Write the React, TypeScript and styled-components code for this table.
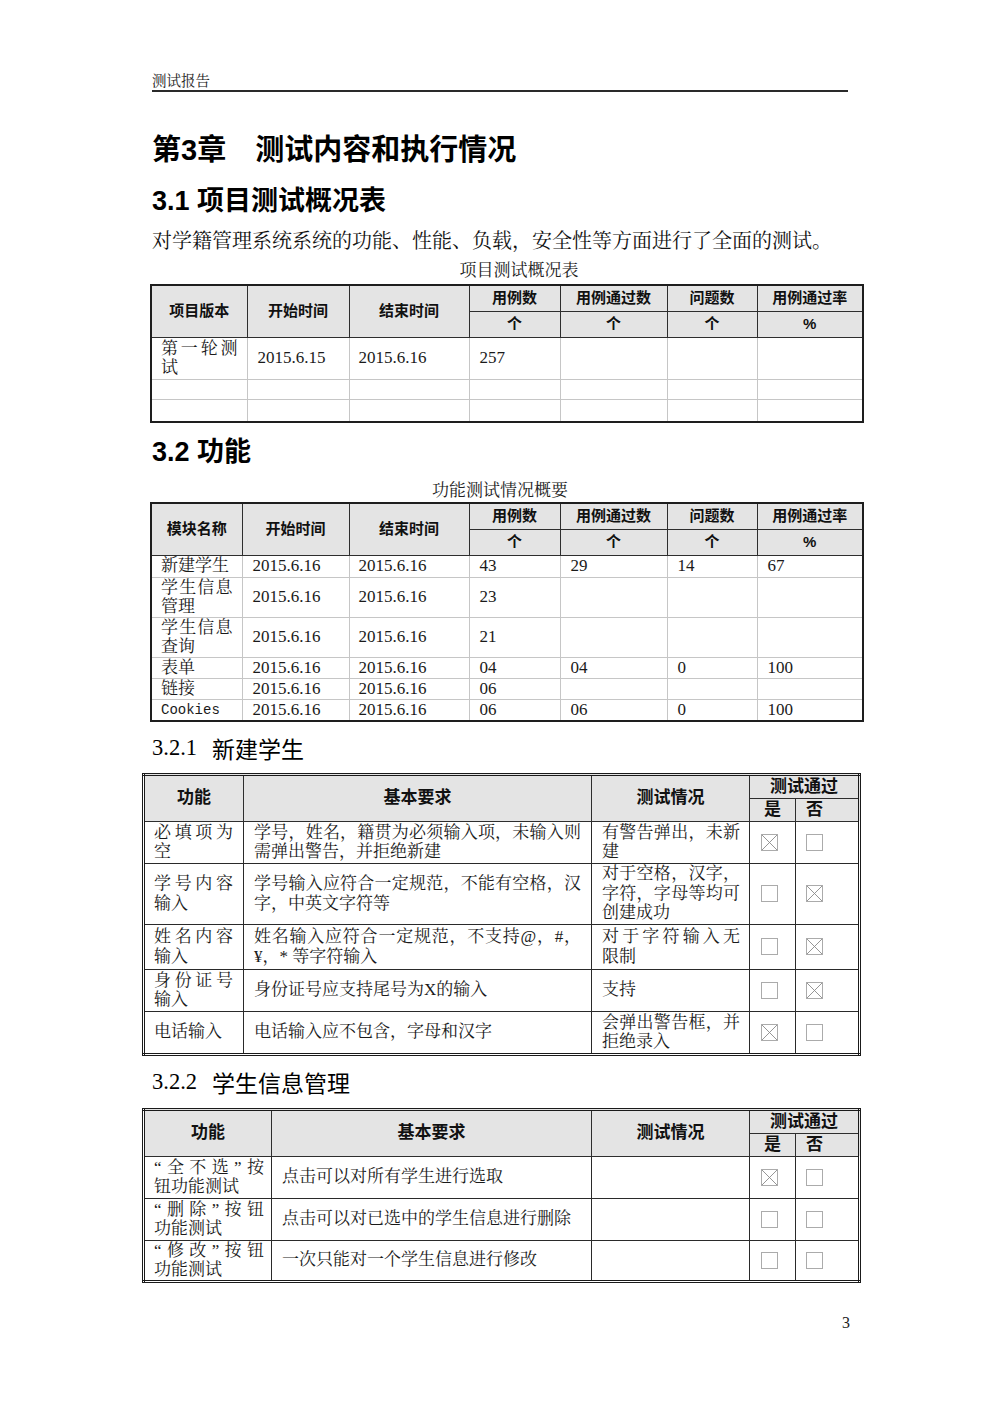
import React from 'react';
import styled, { createGlobalStyle } from 'styled-components';

const SERIF = `"Liberation Serif", "Noto Serif CJK SC", "Noto Sans CJK SC", serif`;
const SANS = `"Liberation Sans", "Noto Sans CJK SC", sans-serif`;
const MONO = `"Liberation Mono", "Noto Sans CJK SC", monospace`;

const GlobalStyle = createGlobalStyle`
  html, body { margin: 0; padding: 0; background: #fff; }
  body { color: #111; }
`;

const Page = styled.div`
  width: 1000px;
  height: 1415px;
  box-sizing: border-box;
  padding-left: 142px;
  display: flex;
  flex-direction: column;
  align-items: flex-start;
  background: #fff;
`;

const RunningHead = styled.div`
  margin-left: 10px;
  width: 696px;
  padding-top: 73px;
  height: 17px;
  font-family: ${SERIF};
  font-size: 14.5px;
  line-height: 17px;
  color: #222;
  border-bottom: 2px solid #2a2a2a;
`;

const ChapterTitle = styled.h1`
  margin: 38px 0 0 10px;
  height: 40px;
  font-family: ${SANS};
  font-weight: 700;
  font-size: 29px;
  line-height: 40px;
  color: #000;
  white-space: pre;
`;

const SectionTitle = styled.h2<{ $mt: number }>`
  margin: ${(p) => p.$mt}px 0 0 10px;
  height: 34px;
  font-family: ${SANS};
  font-weight: 700;
  font-size: 27px;
  line-height: 34px;
  color: #000;
`;

const SubTitle = styled.h3<{ $mt: number }>`
  margin: ${(p) => p.$mt}px 0 0 10px;
  height: 30px;
  display: flex;
  align-items: center;
  font-family: "Noto Sans CJK SC", sans-serif;
  font-weight: 400;
  font-size: 23px;
  line-height: 30px;
  color: #000;
`;

const SubNum = styled.span`
  font-family: "Liberation Serif", serif;
  font-size: 22.5px;
  margin-right: 15px;
`;

const Para = styled.p`
  margin: 9px 0 0 10px;
  height: 28px;
  font-family: ${SERIF};
  font-size: 20px;
  line-height: 28px;
  color: #111;
`;

const Caption = styled.div<{ $mt: number; $shift: number }>`
  margin: ${(p) => p.$mt}px 0 0 10px;
  width: 696px;
  height: 22px;
  box-sizing: border-box;
  padding-left: ${(p) => p.$shift}px;
  text-align: center;
  font-family: ${SERIF};
  font-size: 17px;
  line-height: 22px;
  color: #222;
`;

const SummaryTable = styled.table<{ $mt: number }>`
  margin: ${(p) => p.$mt}px 0 0 8px;
  width: 712px;
  table-layout: fixed;
  border-collapse: collapse;
  border: 2px solid #1e1e1e;
`;

const CheckTable = styled.table<{ $mt: number }>`
  margin: ${(p) => p.$mt}px 0 0 0;
  width: 716px;
  table-layout: fixed;
  border-collapse: collapse;
  border: 3px double #1a1a1a;
`;

const Tr = styled.tr<{ $h: number }>`
  height: ${(p) => p.$h}px;
`;

const HeadCell = styled.th<{ $size: number; $left?: boolean }>`
  background: #e4e4e4;
  border: 1px solid #2e2e2e;
  padding: 0 0 0 ${(p) => (p.$left ? 10 : 0)}px;
  text-align: ${(p) => (p.$left ? 'left' : 'center')};
  vertical-align: middle;
  font-family: ${SANS};
  font-weight: 700;
  font-size: ${(p) => p.$size}px;
  line-height: 20px;
  color: #111;
`;

const HeadText = styled.span`
  display: block;
  height: 20px;
`;

const Cell = styled.td<{ $light?: boolean; $pl?: number; $pr?: number; $font?: 'serif' | 'mono' }>`
  border: 1px solid ${(p) => (p.$light ? '#c6c6c6' : '#2a2a2a')};
  padding: 0 ${(p) => p.$pr ?? 9}px 0 ${(p) => p.$pl ?? 10}px;
  vertical-align: middle;
  text-align: left;
  font-family: ${(p) => (p.$font === 'mono' ? MONO : SERIF)};
  font-size: ${(p) => (p.$font === 'mono' ? 14 : 17)}px;
  line-height: 20px;
  color: #1a1a1a;
`;

const Line = styled.span<{ $fill: boolean }>`
  display: block;
  height: 19.5px;
  text-align: left;
  text-align-last: ${(p) => (p.$fill ? 'justify' : 'left')};
`;

const BoxSvg = styled.svg`
  display: block;
`;

const PageNumber = styled.div`
  margin-top: 30px;
  width: 708px;
  height: 20px;
  text-align: right;
  font-family: "Liberation Serif", serif;
  font-size: 16px;
  line-height: 20px;
  color: #222;
`;

const Lines: React.FC<{ lines: string[] }> = ({ lines }) => (
  <>
    {lines.map((l, i) => (
      <Line key={i} $fill={lines.length > 1 && i < lines.length - 1}>
        {l}
      </Line>
    ))}
  </>
);

const Box: React.FC<{ checked: boolean }> = ({ checked }) => (
  <BoxSvg width={17} height={17} viewBox="0 0 17 17">
    <rect x="0.5" y="0.5" width="16" height="16" fill="none" stroke="#ababab" strokeWidth="1" />
    {checked && <path d="M1 1 L16 16 M16 1 L1 16" stroke="#8a8a8a" strokeWidth="0.9" fill="none" />}
  </BoxSvg>
);

type SumRow = { h: number; name: string[]; mono?: boolean; s: string; e: string; v: string[] };

const sum1: SumRow[] = [
  { h: 42, name: ['第一轮测', '试'], s: '2015.6.15', e: '2015.6.16', v: ['257', '', '', ''] },
  { h: 20, name: [], s: '', e: '', v: ['', '', '', ''] },
  { h: 23, name: [], s: '', e: '', v: ['', '', '', ''] },
];

const sum2: SumRow[] = [
  { h: 22, name: ['新建学生'], s: '2015.6.16', e: '2015.6.16', v: ['43', '29', '14', '67'] },
  { h: 40, name: ['学生信息', '管理'], s: '2015.6.16', e: '2015.6.16', v: ['23', '', '', ''] },
  { h: 40, name: ['学生信息', '查询'], s: '2015.6.16', e: '2015.6.16', v: ['21', '', '', ''] },
  { h: 21, name: ['表单'], s: '2015.6.16', e: '2015.6.16', v: ['04', '04', '0', '100'] },
  { h: 21, name: ['链接'], s: '2015.6.16', e: '2015.6.16', v: ['06', '', '', ''] },
  { h: 21, name: ['Cookies'], mono: true, s: '2015.6.16', e: '2015.6.16', v: ['06', '06', '0', '100'] },
];

const Summary: React.FC<{ mt: number; first: string; firstW: number; rows: SumRow[] }> = ({ mt, first, firstW, rows }) => (
  <SummaryTable $mt={mt}>
    <colgroup>
      <col style={{ width: firstW }} />
      <col style={{ width: 198 - firstW }} />
      <col style={{ width: 120 }} />
      <col style={{ width: 91 }} />
      <col style={{ width: 107 }} />
      <col style={{ width: 90 }} />
      <col style={{ width: 106 }} />
    </colgroup>
    <thead>
      <Tr $h={26}>
        <HeadCell $size={15} rowSpan={2}><HeadText>{first}</HeadText></HeadCell>
        <HeadCell $size={15} rowSpan={2}><HeadText>开始时间</HeadText></HeadCell>
        <HeadCell $size={15} rowSpan={2}><HeadText>结束时间</HeadText></HeadCell>
        <HeadCell $size={15}><HeadText>用例数</HeadText></HeadCell>
        <HeadCell $size={15}><HeadText>用例通过数</HeadText></HeadCell>
        <HeadCell $size={15}><HeadText>问题数</HeadText></HeadCell>
        <HeadCell $size={15}><HeadText>用例通过率</HeadText></HeadCell>
      </Tr>
      <Tr $h={26}>
        <HeadCell $size={15}><HeadText>个</HeadText></HeadCell>
        <HeadCell $size={15}><HeadText>个</HeadText></HeadCell>
        <HeadCell $size={15}><HeadText>个</HeadText></HeadCell>
        <HeadCell $size={15}><HeadText>%</HeadText></HeadCell>
      </Tr>
    </thead>
    <tbody>
      {rows.map((r, i) => (
        <Tr $h={r.h} key={i}>
          <Cell $light $pl={9} $font={r.mono ? 'mono' : 'serif'}>
            <Lines lines={r.name} />
          </Cell>
          <Cell $light>{r.s}</Cell>
          <Cell $light $pl={9}>{r.e}</Cell>
          {r.v.map((v, j) => (
            <Cell $light key={j}>{v}</Cell>
          ))}
        </Tr>
      ))}
    </tbody>
  </SummaryTable>
);

type CheckRow = { h: number; f: string[]; req: string[]; res: string[]; yes: boolean; no: boolean };

const check1: CheckRow[] = [
  { h: 42, f: ['必填项为', '空'], req: ['学号，姓名，籍贯为必须输入项，未输入则', '需弹出警告，并拒绝新建'], res: ['有警告弹出，未新', '建'], yes: true, no: false },
  { h: 61, f: ['学号内容', '输入'], req: ['学号输入应符合一定规范，不能有空格，汉', '字，中英文字符等'], res: ['对于空格，汉字，', '字符，字母等均可', '创建成功'], yes: false, no: true },
  { h: 45, f: ['姓名内容', '输入'], req: ['姓名输入应符合一定规范，不支持@，#，', '¥，* 等字符输入'], res: ['对于字符输入无', '限制'], yes: false, no: true },
  { h: 42, f: ['身份证号', '输入'], req: ['身份证号应支持尾号为X的输入'], res: ['支持'], yes: false, no: true },
  { h: 43, f: ['电话输入'], req: ['电话输入应不包含，字母和汉字'], res: ['会弹出警告框，并', '拒绝录入'], yes: true, no: false },
];

const check2: CheckRow[] = [
  { h: 42, f: ['“全不选”按', '钮功能测试'], req: ['点击可以对所有学生进行选取'], res: [], yes: true, no: false },
  { h: 42, f: ['“删除”按钮', '功能测试'], req: ['点击可以对已选中的学生信息进行删除'], res: [], yes: false, no: false },
  { h: 41, f: ['“修改”按钮', '功能测试'], req: ['一次只能对一个学生信息进行修改'], res: [], yes: false, no: false },
];

const Checks: React.FC<{ mt: number; firstW: number; rows: CheckRow[] }> = ({ mt, firstW, rows }) => (
  <CheckTable $mt={mt}>
    <colgroup>
      <col style={{ width: firstW }} />
      <col style={{ width: 448 - firstW }} />
      <col style={{ width: 158 }} />
      <col style={{ width: 46 }} />
      <col style={{ width: 64 }} />
    </colgroup>
    <thead>
      <Tr $h={24}>
        <HeadCell $size={17} rowSpan={2}><HeadText>功能</HeadText></HeadCell>
        <HeadCell $size={17} rowSpan={2}><HeadText>基本要求</HeadText></HeadCell>
        <HeadCell $size={17} rowSpan={2}><HeadText>测试情况</HeadText></HeadCell>
        <HeadCell $size={17} colSpan={2}><HeadText>测试通过</HeadText></HeadCell>
      </Tr>
      <Tr $h={23}>
        <HeadCell $size={17}><HeadText>是</HeadText></HeadCell>
        <HeadCell $size={17} $left><HeadText>否</HeadText></HeadCell>
      </Tr>
    </thead>
    <tbody>
      {rows.map((r, i) => (
        <Tr $h={r.h} key={i}>
          <Cell $pl={9} $pr={firstW > 110 ? 7 : 10}>
            <Lines lines={r.f} />
          </Cell>
          <Cell $pl={10} $pr={10}>
            <Lines lines={r.req} />
          </Cell>
          <Cell $pl={10} $pr={9}>
            <Lines lines={r.res} />
          </Cell>
          <Cell $pl={11} $pr={0}>
            <Box checked={r.yes} />
          </Cell>
          <Cell $pl={10} $pr={0}>
            <Box checked={r.no} />
          </Cell>
        </Tr>
      ))}
    </tbody>
  </CheckTable>
);

export default function App() {
  return (
    <Page>
      <GlobalStyle />
      <RunningHead>测试报告</RunningHead>
      <ChapterTitle>{'第3章\u2003测试内容和执行情况'}</ChapterTitle>
      <SectionTitle $mt={14}>3.1 项目测试概况表</SectionTitle>
      <Para>对学籍管理系统系统的功能、性能、负载，安全性等方面进行了全面的测试。</Para>
      <Caption $mt={5} $shift={38}>项目测试概况表</Caption>
      <Summary mt={2} first="项目版本" firstW={96} rows={sum1} />
      <SectionTitle $mt={12}>3.2 功能</SectionTitle>
      <Caption $mt={11} $shift={0}>功能测试情况概要</Caption>
      <Summary mt={0} first="模块名称" firstW={91} rows={sum2} />
      <SubTitle $mt={11}>
        <SubNum>3.2.1</SubNum>新建学生
      </SubTitle>
      <Checks mt={10} firstW={100} rows={check1} />
      <SubTitle $mt={11}>
        <SubNum>3.2.2</SubNum>学生信息管理
      </SubTitle>
      <Checks mt={11} firstW={128} rows={check2} />
      <PageNumber>3</PageNumber>
    </Page>
  );
}
